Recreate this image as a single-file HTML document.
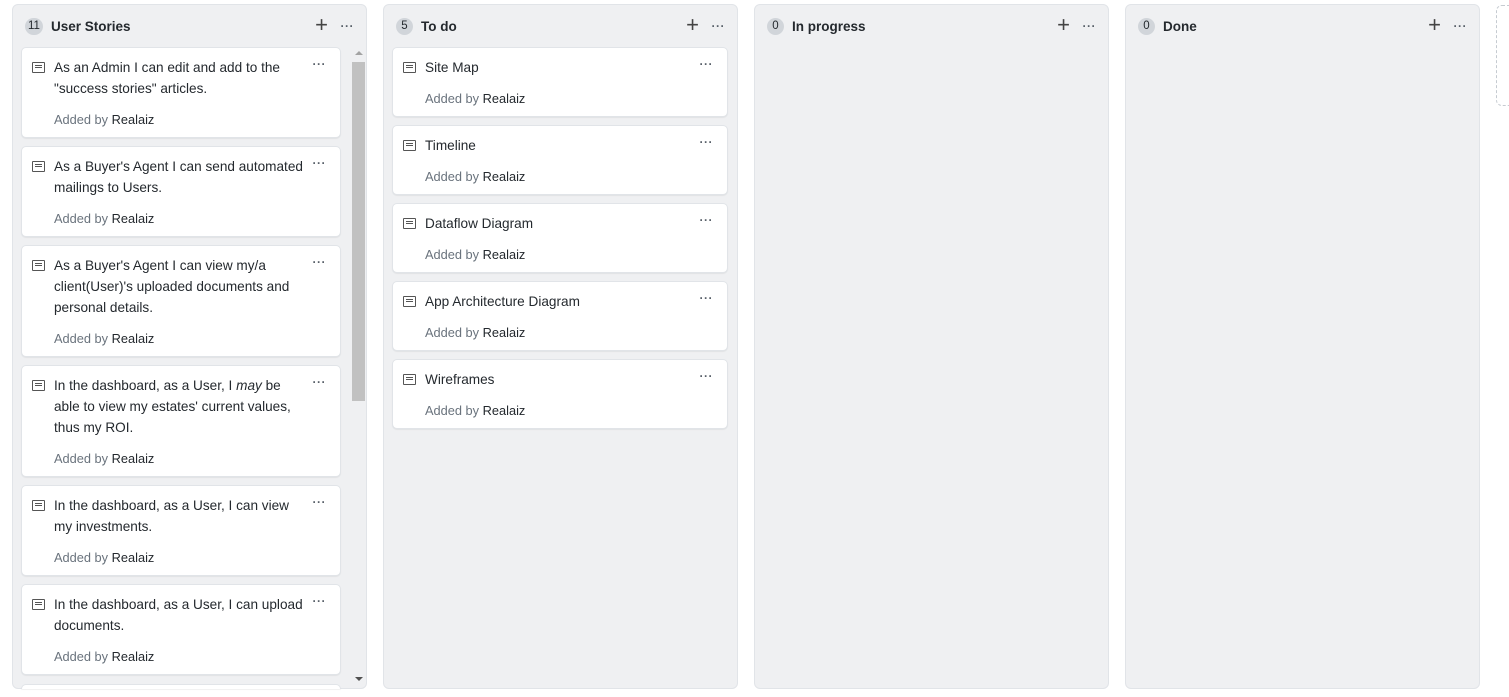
<!DOCTYPE html>
<html><head><meta charset="utf-8"><style>
*{box-sizing:border-box;margin:0;padding:0}
body{width:1509px;height:697px;background:#fff;font-family:"Liberation Sans",Arial,sans-serif;font-size:13px;color:#24292e;position:relative;overflow:hidden}
.col{position:absolute;top:4px;width:355px;height:685px;background:#eff0f2;border:1px solid #e1e4e8;border-radius:6px}
.hd{position:absolute;top:13px;left:12px;font-weight:bold;font-size:13.5px;display:flex;align-items:center}
.cnt{display:inline-block;background:#d1d5da;border-radius:10px;font-size:11.5px;font-weight:normal;min-width:17px;height:17px;line-height:17px;text-align:center;padding:0 3px;margin-right:8px;color:#24292e}
.plus{position:absolute;top:10px;right:38px;font-size:22px;font-weight:300;color:#444;line-height:20px}
.dots{position:absolute;color:#586069;font-size:12px;letter-spacing:0.5px;font-weight:bold}
.hdots{top:14px;right:12px}
.card{position:absolute;background:#fff;border:1px solid #e1e4e8;border-radius:5px;box-shadow:0 1px 1px rgba(0,0,0,.06)}
.ic{position:absolute;left:10px;top:14px;width:13px;height:11px;border:1px solid #555;border-radius:1px}
.ic:before{content:"";position:absolute;left:2px;top:2px;width:7px;height:1px;background:#555;box-shadow:0 2px 0 #555}
.t{position:absolute;left:32px;top:9px;width:258px;line-height:21px;font-size:13.6px}
.by{position:absolute;left:32px;bottom:10px;color:#6a737d;font-size:12.8px}
.by b{font-weight:normal;color:#24292e}
.cd{top:9px;right:14px}
</style></head><body>

<div class="col" style="left:12px">
 <div class="hd"><span class="cnt">11</span>User Stories</div><div class="plus">+</div><div class="dots hdots">···</div>
 <div style="position:absolute;left:339px;top:57px;width:13px;height:339px;background:#c1c1c1"></div>
 <div style="position:absolute;left:342px;top:46px;border:4px solid transparent;border-bottom:4px solid #a3a3a3;border-top:0"></div>
 <div style="position:absolute;left:342px;top:672px;border:4px solid transparent;border-top:4px solid #505050;border-bottom:0"></div>
</div>
<div class="col" style="left:383px"><div class="hd"><span class="cnt">5</span>To do</div><div class="plus">+</div><div class="dots hdots">···</div></div>
<div class="col" style="left:754px"><div class="hd"><span class="cnt">0</span>In progress</div><div class="plus">+</div><div class="dots hdots">···</div></div>
<div class="col" style="left:1125px"><div class="hd"><span class="cnt">0</span>Done</div><div class="plus">+</div><div class="dots hdots">···</div></div>
<div style="position:absolute;left:1496px;top:5px;width:30px;height:101px;border:1px dashed #c6cbd1;border-radius:6px"></div>

<div class="card" style="left:21px;top:47px;width:320px;height:91px"><div class="ic"></div><div class="t">As an Admin I can edit and add to the "success stories" articles.</div><div class="by">Added by <b>Realaiz</b></div><div class="dots cd">···</div></div>
<div class="card" style="left:21px;top:146px;width:320px;height:91px"><div class="ic"></div><div class="t">As a Buyer's Agent I can send automated mailings to Users.</div><div class="by">Added by <b>Realaiz</b></div><div class="dots cd">···</div></div>
<div class="card" style="left:21px;top:245px;width:320px;height:112px"><div class="ic"></div><div class="t">As a Buyer's Agent I can view my/a client(User)'s uploaded documents and personal details.</div><div class="by">Added by <b>Realaiz</b></div><div class="dots cd">···</div></div>
<div class="card" style="left:21px;top:365px;width:320px;height:112px"><div class="ic"></div><div class="t">In the dashboard, as a User, I <i>may</i> be<br>able to view my estates' current values, thus my ROI.</div><div class="by">Added by <b>Realaiz</b></div><div class="dots cd">···</div></div>
<div class="card" style="left:21px;top:485px;width:320px;height:91px"><div class="ic"></div><div class="t">In the dashboard, as a User, I can view<br>my investments.</div><div class="by">Added by <b>Realaiz</b></div><div class="dots cd">···</div></div>
<div class="card" style="left:21px;top:584px;width:320px;height:91px"><div class="ic"></div><div class="t">In the dashboard, as a User, I can upload documents.</div><div class="by">Added by <b>Realaiz</b></div><div class="dots cd">···</div></div>
<div class="card" style="left:21px;top:684px;width:320px;height:5px;border-bottom:0;border-radius:5px 5px 0 0"></div>

<div class="card" style="left:392px;top:47px;width:336px;height:70px"><div class="ic"></div><div class="t">Site Map</div><div class="by">Added by <b>Realaiz</b></div><div class="dots cd">···</div></div>
<div class="card" style="left:392px;top:125px;width:336px;height:70px"><div class="ic"></div><div class="t">Timeline</div><div class="by">Added by <b>Realaiz</b></div><div class="dots cd">···</div></div>
<div class="card" style="left:392px;top:203px;width:336px;height:70px"><div class="ic"></div><div class="t">Dataflow Diagram</div><div class="by">Added by <b>Realaiz</b></div><div class="dots cd">···</div></div>
<div class="card" style="left:392px;top:281px;width:336px;height:70px"><div class="ic"></div><div class="t">App Architecture Diagram</div><div class="by">Added by <b>Realaiz</b></div><div class="dots cd">···</div></div>
<div class="card" style="left:392px;top:359px;width:336px;height:70px"><div class="ic"></div><div class="t">Wireframes</div><div class="by">Added by <b>Realaiz</b></div><div class="dots cd">···</div></div>
</body></html>
